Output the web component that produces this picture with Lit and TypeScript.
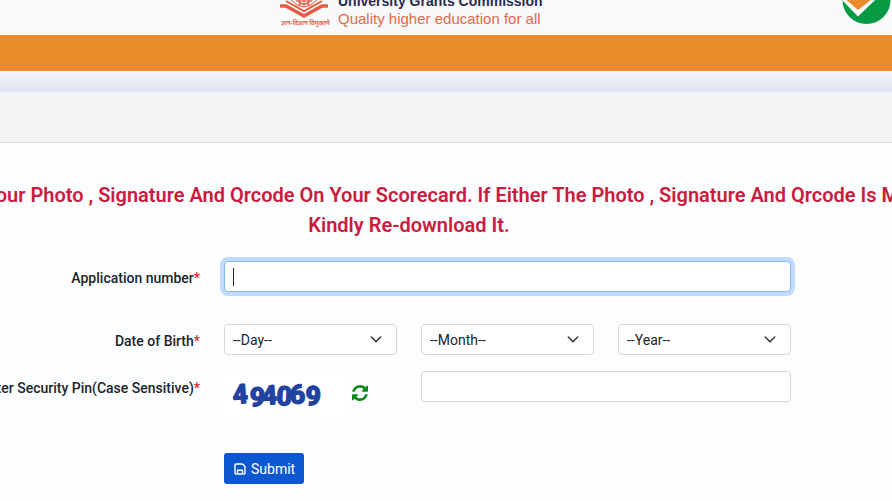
import { LitElement, html, css } from "lit";
import { customElement, query } from "lit/decorators.js";

@customElement("app-root")
export class AppRoot extends LitElement {
  static styles = css`
    :host {
      display: block;
      min-height: 100vh;
      overflow: hidden;
      background: #fcfdff;
      color: #212529;
      font: 400 14px/20px Roboto, sans-serif;
    }
    * {
      box-sizing: border-box;
    }
    .header {
      display: flex;
      align-items: flex-end;
      height: 35px;
      overflow: hidden;
      padding-left: 277px;
      background: #f8fafc;
    }
    .emblem {
      flex: none;
      width: 54px;
      height: 35px;
      margin-right: 7px;
    }
    .brand {
      flex: 1;
      padding-bottom: 8px;
      white-space: nowrap;
      font: 400 15px/17px "Liberation Sans", Arial, sans-serif;
      color: #e4694a;
    }
    .brand strong {
      display: block;
      font-size: 14px;
      color: #2b2b4b;
    }
    .check {
      flex: none;
      width: 52px;
      height: 35px;
    }
    .nav {
      height: 36px;
      background: #ec8b2b;
    }
    .shade {
      height: 21px;
      background: linear-gradient(#f5f6fd, #dfe2f0);
    }
    .band {
      height: 51px;
      background: #f2f3f5;
      border-bottom: 1px solid #dcdddf;
    }
    .notice {
      display: flex;
      flex-direction: column;
      align-items: center;
      margin: 37px 74px 0 0;
      font-size: 20px;
      line-height: 30px;
      font-weight: 600;
      color: #c91c3e;
      white-space: nowrap;
    }
    .form {
      display: grid;
      grid-template-columns: 200px repeat(3, minmax(0, 1fr));
      column-gap: 24px;
      align-items: start;
      padding: 21px 101px 16px 0;
    }
    .label {
      display: flex;
      justify-content: flex-end;
      padding-top: 7px;
      font-weight: 500;
      white-space: nowrap;
    }
    .req {
      color: #e3242b;
    }
    .control {
      display: block;
      width: 100%;
      height: 31px;
      margin: 0;
      padding: 0 8px;
      border: 1px solid #d3d6da;
      border-radius: 4px;
      background: #fff;
      color: #212529;
      font: inherit;
      outline: none;
    }
    .control:focus {
      border-color: #86b7fe;
      box-shadow: 0 0 0 4px #c2dbfe;
    }
    .number:focus:placeholder-shown {
      caret-color: transparent;
      background: linear-gradient(#212529, #212529) 8px center / 1px 18px
        no-repeat #fff;
    }
    .wide {
      grid-column: 2 / 5;
    }
    .two {
      grid-column: 3 / 5;
    }
    .row-date {
      margin-top: 32px;
    }
    .row-pin {
      margin-top: 16px;
    }
    .select-wrap {
      display: grid;
      align-items: center;
    }
    .select-wrap > * {
      grid-area: 1 / 1;
    }
    select.control {
      appearance: none;
    }
    .chevron {
      justify-self: end;
      width: 12px;
      height: 12px;
      margin-right: 15px;
      pointer-events: none;
    }
    .captcha {
      display: flex;
      align-items: flex-start;
      gap: 8px;
    }
    .captcha-image {
      flex: none;
      width: 120px;
      height: 50px;
      background: #fff;
    }
    .digits {
      font: 900 27px Roboto, sans-serif;
      fill: #2142a0;
      stroke: #2142a0;
      stroke-width: 1px;
      stroke-linejoin: round;
    }
    .refresh {
      margin-top: 14px;
      padding: 0;
      border: 0;
      background: none;
      line-height: 0;
      cursor: pointer;
    }
    .refresh svg {
      width: 16px;
      height: 16px;
      fill: #0c8a17;
    }
    .submit {
      grid-column: 2;
      justify-self: start;
      display: flex;
      align-items: center;
      gap: 5px;
      height: 31px;
      margin-top: 32px;
      padding: 0 9px 0 10px;
      border: 0;
      border-radius: 3px;
      background: #0b57cf;
      color: #fff;
      font: inherit;
      cursor: pointer;
    }
    .submit svg {
      width: 12px;
      height: 12px;
    }
  `;

  @query(".number") private numberInput!: HTMLInputElement;

  protected firstUpdated() {
    this.numberInput.focus();
  }

  private picker(name: string) {
    return html`<div class="select-wrap row-date">
      <select class="control" aria-label=${name}>
        <option>--${name}--</option>
      </select>
      <svg class="chevron" viewBox="0 0 12 12" fill="none" stroke="#343a40" stroke-width="1.6" stroke-linecap="round" stroke-linejoin="round">
        <path d="M1.300 3L6 7.700l4.700-4.700" />
      </svg>
    </div>`;
  }

  render() {
    return html`
      <header class="header">
        <svg class="emblem" viewBox="0 0 54 35" fill="none" aria-hidden="true">
          <g stroke="#e85c41">
            <path d="M14 0q13 14 26 0" stroke-width="1" />
            <path d="M20 0q7 8 14 0M23 0v5M27 0v7M31 0v5M19 1h16M21 4h12" stroke-width="1.2" />
            <path d="M9 1l18 10 18-10" stroke-width="2" />
            <path d="M3 6h6l18 10 18-10h6" stroke-width="3.600" />
          </g>
          <text x="4" y="25" font-family="Noto Sans, sans-serif" font-size="6" font-weight="700" fill="#e4694a">ज्ञान-विज्ञान विमुक्तये</text>
        </svg>
        <div class="brand">
          <strong>University Grants Commission</strong>
          Quality higher education for all
        </div>
        <svg class="check" viewBox="0 0 52 35" aria-hidden="true">
          <circle cx="26.500" cy="0" r="24" fill="#079a43" />
          <path d="M2 0L18 16.500 35 0z" fill="#fff" />
          <path d="M6.500 0L18 10 31 0z" fill="#ec8b2b" />
        </svg>
      </header>
      <div class="nav"></div>
      <div class="shade"></div>
      <div class="band"></div>
      <main>
        <div class="notice" role="alert">
          <span>Please Verify Your Photo , Signature And Qrcode On Your Scorecard. If Either The Photo , Signature And Qrcode Is Missing,</span>
          <span>Kindly Re-download It.</span>
        </div>
        <form class="form" @submit=${(e: Event) => e.preventDefault()}>
          <label class="label" for="number">Application number<span class="req">*</span></label>
          <input class="control number wide" id="number" type="text" placeholder=" " autocomplete="off" />

          <div class="label row-date">Date of Birth<span class="req">*</span></div>
          ${["Day", "Month", "Year"].map((n) => this.picker(n))}

          <label class="label row-pin" for="pin">Enter Security Pin(Case Sensitive)<span class="req">*</span></label>
          <div class="captcha row-pin">
            <svg class="captcha-image" viewBox="0 0 120 50" role="img" aria-label="Security pin">
              <text class="digits" x="9 25 38 52 66 81" y="33 35 34 34 33 34" rotate="-4 3 -3 3 -2 2">494069</text>
            </svg>
            <button class="refresh" type="button" aria-label="Refresh security pin">
              <svg viewBox="0 0 1536 1536">
                <path d="M1511 928q0 5-1 7-64 268-268 434.500t-478 166.500q-146 0-282.500-55t-243.500-157l-129 129q-19 19-45 19t-45-19-19-45v-448q0-26 19-45t45-19h448q26 0 45 19t19 45-19 45l-137 137q71 66 161 102t187 36q134 0 250-65t186-179q11-17 53-117 8-23 30-23h192q13 0 22.500 9.500t9.500 22.500zm25-800v448q0 26-19 45t-45 19h-448q-26 0-45-19t-19-45 19-45l138-138q-148-137-349-137-134 0-250 65t-186 179q-11 17-53 117-8 23-30 23h-199q-13 0-22.500-9.500t-9.500-22.500v-7q65-268 270-434.500t480-166.500q146 0 284 55.500t245 156.500l130-129q19-19 45-19t45 19 19 45z" />
              </svg>
            </button>
          </div>
          <input class="control row-pin two" id="pin" type="text" autocomplete="off" aria-label="Security pin" />

          <button class="submit" type="submit">
            <svg viewBox="0 0 12 12" fill="none" stroke="#fff" stroke-width="1.4" stroke-linejoin="round" aria-hidden="true">
              <path d="M2 1h6.500L11 3.500V10a1 1 0 0 1-1 1H2a1 1 0 0 1-1-1V2a1 1 0 0 1 1-1zM3.500 11V7.300h5V11" />
            </svg>
            Submit
          </button>
        </form>
      </main>
    `;
  }
}
